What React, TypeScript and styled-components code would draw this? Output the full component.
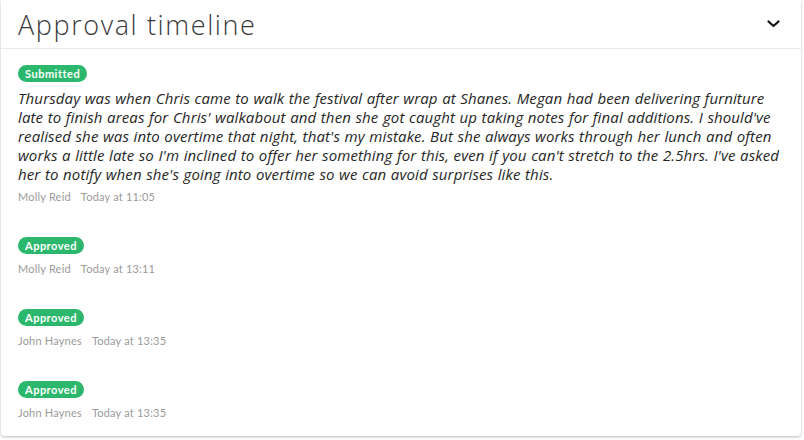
import styled, { createGlobalStyle } from "styled-components";

const GlobalStyle = createGlobalStyle`
  html, body {
    margin: 0;
    padding: 0;
    background: #ffffff;
  }
  body {
    font-family: Lato, "Noto Sans", "Liberation Sans", sans-serif;
    -webkit-font-smoothing: antialiased;
  }
`;

type Entry = {
  status: "Submitted" | "Approved";
  note?: string[];
  author: string;
  time: string;
};

const entries: Entry[] = [
  {
    status: "Submitted",
    note: [
      "Thursday was when Chris came to walk the festival after wrap at Shanes. Megan had been delivering furniture",
      "late to finish areas for Chris' walkabout and then she got caught up taking notes for final additions. I should've",
      "realised she was into overtime that night, that's my mistake. But she always works through her lunch and often",
      "works a little late so I'm inclined to offer her something for this, even if you can't stretch to the 2.5hrs. I've asked",
      "her to notify when she's going into overtime so we can avoid surprises like this.",
    ],
    author: "Molly Reid",
    time: "Today at 11:05",
  },
  { status: "Approved", author: "Molly Reid", time: "Today at 13:11" },
  { status: "Approved", author: "John Haynes", time: "Today at 13:35" },
  { status: "Approved", author: "John Haynes", time: "Today at 13:35" },
];

const Page = styled.div`
  padding: 0 2px 4px 1px;
`;

const Card = styled.section`
  background: #fff;
  border-radius: 0 0 4px 4px;
  box-shadow: 0 1px 3px rgba(0, 0, 0, 0.28);
  width: 800px;
`;

const Header = styled.header`
  height: 48px;
  display: flex;
  align-items: center;
  justify-content: space-between;
  padding: 0 21px 0 17px;
  border-bottom: 1px solid #e9e9e9;
`;

const Title = styled.h1`
  margin: 0;
  font-family: "Open Sans", "Noto Sans", sans-serif;
  font-size: 27px;
  font-weight: 300;
  letter-spacing: 1.6px;
  color: #3a3a3a;
`;

const Toggle = styled.button`
  border: 0;
  background: none;
  padding: 0;
  width: 13px;
  height: 13px;
  display: flex;
  align-items: center;
  justify-content: center;
  cursor: pointer;
`;

const Timeline = styled.div`
  padding: 16px 11px 16px 17px;
  display: flex;
  flex-direction: column;
  gap: 33px;
`;

const Item = styled.article`
  display: flex;
  flex-direction: column;
  align-items: flex-start;
`;

const Badge = styled.span<{ $tone: "Submitted" | "Approved" }>`
  display: inline-flex;
  align-items: center;
  height: 17px;
  padding: 0 7px;
  border-radius: 9px;
  background: ${(p) => (p.$tone === "Approved" ? "#2bb86c" : "#2bb86c")};
  color: #fff;
  font-size: 11px;
  font-weight: 700;
  letter-spacing: 0.5px;
`;

const Note = styled.p`
  margin: 7px 0 0;
  font-family: "Open Sans", "Noto Sans", sans-serif;
  font-size: 15px;
  line-height: 19px;
  font-style: italic;
  letter-spacing: 0.12px;
  word-spacing: 0.5px;
  color: #262626;
`;

const NoteLine = styled.span`
  display: block;
  white-space: nowrap;
`;

const Meta = styled.div<{ $afterNote: boolean }>`
  margin-top: ${(p) => (p.$afterNote ? "6px" : "8px")};
  display: flex;
  gap: 10px;
  font-size: 11px;
  line-height: 14px;
  letter-spacing: 0.2px;
  color: #9a9a9a;
`;

const Chevron = () => (
  <svg width="13" height="8" viewBox="0 0 13 8" fill="none">
    <polyline
      points="1.5,1.5 6.5,6 11.5,1.5"
      stroke="#111"
      strokeWidth="2.2"
      strokeLinecap="round"
      strokeLinejoin="round"
    />
  </svg>
);

export default function App() {
  return (
    <Page>
      <GlobalStyle />
      <Card>
        <Header>
          <Title>Approval timeline</Title>
          <Toggle aria-label="Collapse">
            <Chevron />
          </Toggle>
        </Header>
        <Timeline>
          {entries.map((e, i) => (
            <Item key={i}>
              <Badge $tone={e.status}>{e.status}</Badge>
              {e.note && (
                <Note>
                  {e.note.map((line, j) => (
                    <NoteLine key={j}>{line} </NoteLine>
                  ))}
                </Note>
              )}
              <Meta $afterNote={!!e.note}>
                <span>{e.author}</span>
                <span>{e.time}</span>
              </Meta>
            </Item>
          ))}
        </Timeline>
      </Card>
    </Page>
  );
}
